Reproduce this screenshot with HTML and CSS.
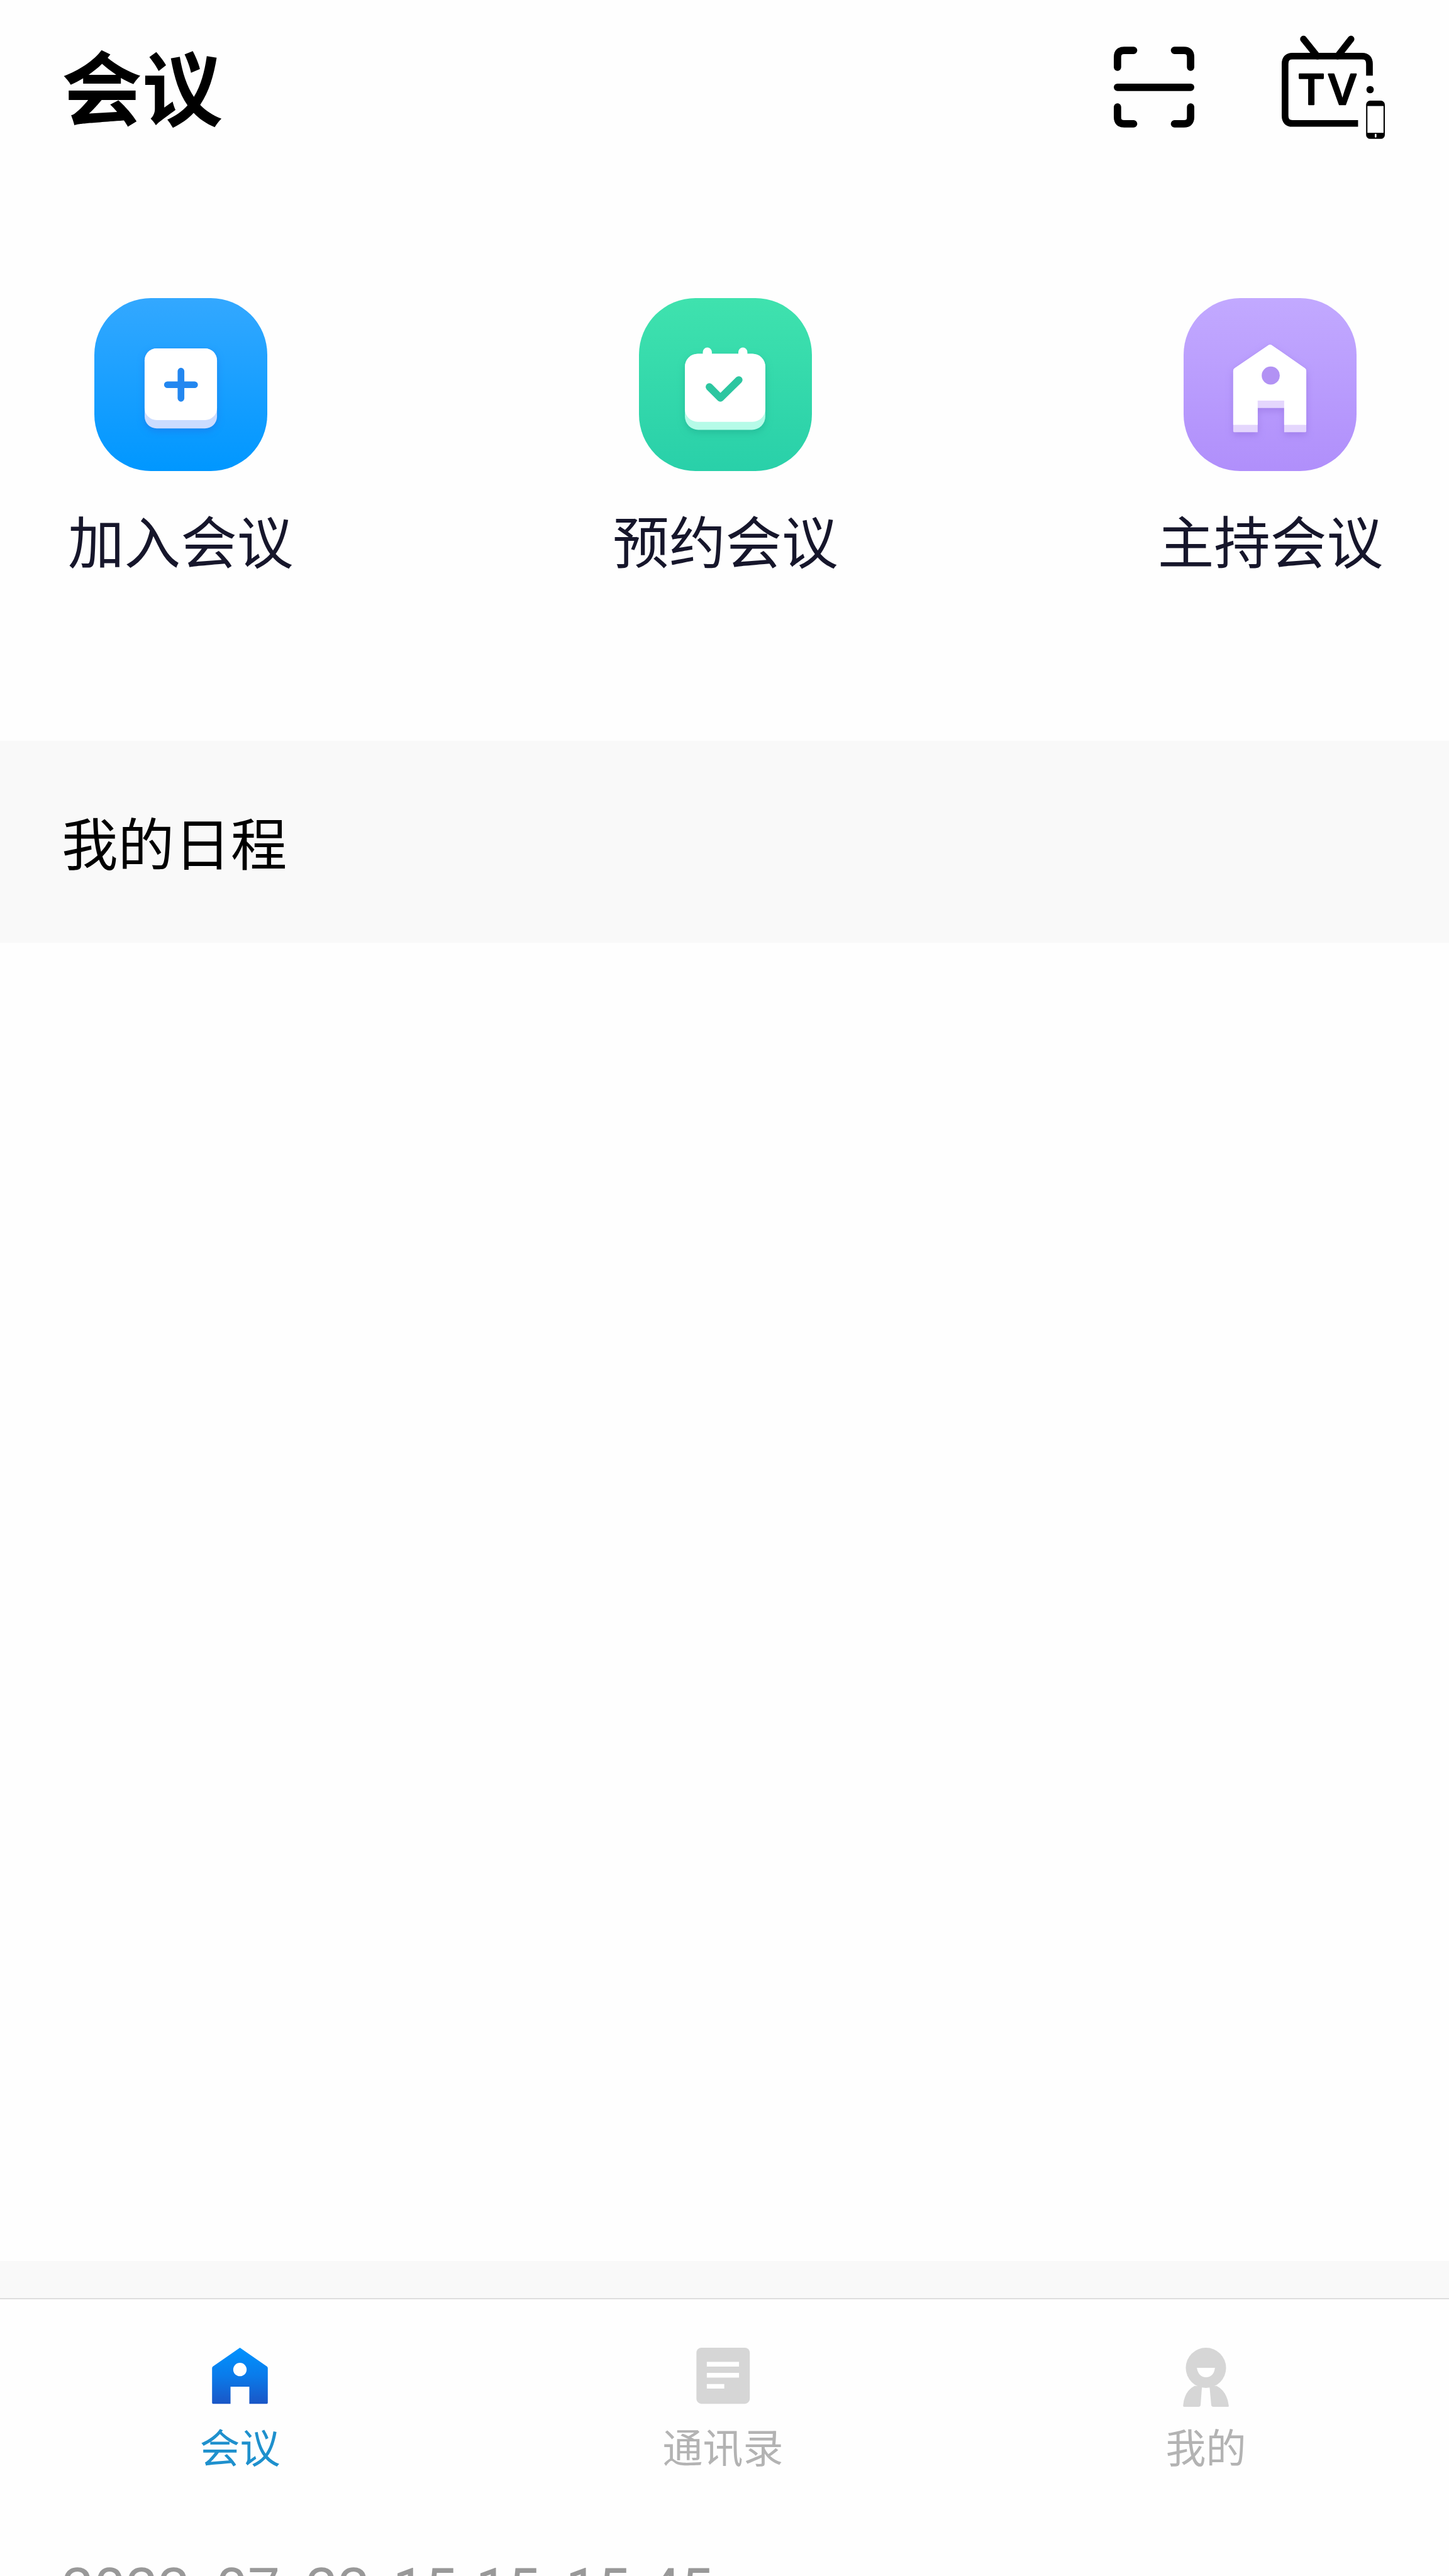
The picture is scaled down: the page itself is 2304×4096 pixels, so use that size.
FILE: index.html
```
<!DOCTYPE html>
<html lang="zh-CN">

<head>
    <meta charset="utf-8">
    <title>会议</title>
    <link rel="stylesheet" href="styles.css">
</head>

<body>
    <header class="header">
        <h1 class="page_title">会议</h1>
        <div class="header_icons">
            <svg class="icon_scan" viewBox="0 0 240 241" fill="none" stroke="#000" stroke-width="22" stroke-linecap="round">
                <path d="M11 61V31Q11 11 31 11H59M181 11H209Q229 11 229 31V61M11 180V210Q11 230 31 230H59M181 230H209Q229 230 229 210V180M11 121H229"/>
            </svg>
            <svg class="icon_tv" viewBox="0 0 308 309">
                <g fill="none" stroke="#000" stroke-width="20">
                    <path d="M262 120V85Q262 62 240 62H32Q10 62 10 85V240Q10 263 32 263H228"/>
                    <path d="M65 11L106 62M207 11L167 62" stroke-linecap="round"/>
                </g>
                <text class="tv_text" x="48" y="207" textLength="177">TV</text>
                <circle cx="264" cy="162" r="11"/>
                <rect x="252" y="195" width="56" height="114" rx="12"/>
                <rect x="256" y="211" width="48" height="80" fill="#fff"/>
                <rect x="278" y="294" width="5" height="11" rx="2" fill="#fff"/>
            </svg>
        </div>
    </header>

    <section class="actions">
        <div class="action">
            <div class="action_icon blue">
                <svg viewBox="0 0 516 516">
                    <rect class="shade_blue" x="150" y="150" width="216" height="239" rx="36" fill="#cbdcff"/>
                    <rect x="150" y="150" width="216" height="214" rx="36" fill="#fff"/>
                    <path d="M218 258.500H299M258.500 218V299" stroke="#2387f0" stroke-width="20" stroke-linecap="round"/>
                </svg>
            </div>
            <span class="action_text">加入会议</span>
        </div>
        <div class="action">
            <div class="action_icon green">
                <svg viewBox="0 0 516 516">
                    <rect class="shade_green" x="137" y="166" width="240" height="227" rx="40" fill="#b6fbe8"/>
                    <rect x="137" y="166" width="240" height="203" rx="38" fill="#fff"/>
                    <path d="M204 161V180M310 161V180" stroke="#fff" stroke-width="27" stroke-linecap="round"/>
                    <path d="M210 265L243 298L298 244" fill="none" stroke="#2cc6a0" stroke-width="22" stroke-linecap="round" stroke-linejoin="round"/>
                </svg>
            </div>
            <span class="action_text">预约会议</span>
        </div>
        <div class="action">
            <div class="action_icon purple">
                <svg viewBox="0 0 516 516">
                    <path class="shade_purple" d="M252 141Q258 137 264 141L362 209Q366 212 366 217V397Q366 400 363 400H300V328H221V400H151Q148 400 148 397V217Q148 212 152 209Z" fill="#e4d6fd"/>
                    <path d="M252 141Q258 137 264 141L362 209Q366 212 366 217V378H300V306H221V378H148V217Q148 212 152 209Z" fill="#fff"/>
                    <circle cx="260" cy="231" r="27" fill="#b292f4"/>
                </svg>
            </div>
            <span class="action_text">主持会议</span>
        </div>
    </section>

    <h2 class="sub_title">我的日程</h2>
    <main class="schedule"></main>

    <nav class="tabs">
        <div class="tab active">
            <svg class="tab_icon" viewBox="0 0 178 178">
                <defs>
                    <linearGradient id="home" x1="0" y1="0" x2="0" y2="1">
                        <stop offset="0" stop-color="#0093ff"/>
                        <stop offset="0.5" stop-color="#0a7bea"/>
                        <stop offset="1" stop-color="#1a56c6"/>
                    </linearGradient>
                </defs>
                <path d="M89 0L170 56Q172 58 172 61V164Q172 167 169 167H117V116H61V167H9Q6 167 6 164V61Q6 58 8 56Z" fill="url(#home)"/>
                <circle cx="89" cy="65" r="20" fill="#fff"/>
            </svg>
            <span>会议</span>
        </div>
        <div class="tab">
            <svg class="tab_icon" viewBox="0 0 178 178">
                <rect x="10" y="0" width="159" height="167" rx="15" fill="#d6d6d6"/>
                <path d="M41 49H137M41 82H137M41 115H93" stroke="#fff" stroke-width="14"/>
            </svg>
            <span>通讯录</span>
        </div>
        <div class="tab">
            <svg class="tab_icon" viewBox="0 0 178 178" fill="#d6d6d6">
                <path d="M55 114Q24 130 21 173Q21 176 24 176H68Q72 176 73 172L77 118H100L105 172Q106 176 110 176H154Q158 176 157 173Q152 130 121 114Z"/>
                <circle cx="89" cy="60" r="60"/>
                <path d="M62 60H116Q112 88 89 88Q67 88 62 60Z" fill="#fff"/>
            </svg>
            <span>我的</span>
        </div>
    </nav>

    <p class="meeting_time">2022<span class="dash">-</span>07<span class="dash">-</span>22 15<span class="colon">:</span>15<span class="dash">-</span>15<span class="colon">:</span>45</p>
</body>

</html>
```

FILE: styles.css
```
* {
    box-sizing: border-box;
}

body {
    width: 2304px;
    height: 4096px;
    margin: 0;
    overflow: hidden;
    display: flex;
    flex-direction: column;
    background: #fefefe;
    color: #000;
    font-family: "Noto Sans CJK SC", sans-serif;
}

body > * {
    flex-shrink: 0;
}

svg {
    display: block;
}

.header {
    height: 270px;
    padding: 0 102px 0 98px;
    display: flex;
    align-items: center;
    justify-content: space-between;
}

.page_title {
    margin: 0;
    font-size: 128px;
    font-weight: 700;
    line-height: 160px;
}

.header_icons {
    display: flex;
    align-items: center;
    gap: 139px;
    padding-top: 6px;
}

.icon_scan {
    width: 128px;
    height: 129px;
}

.icon_tv {
    width: 164px;
    height: 165px;
}

.tv_text {
    font-family: Inter, sans-serif;
    font-size: 124px;
    font-weight: 500;
    stroke: #000;
    stroke-width: 5px;
    stroke-linejoin: round;
}

.actions {
    height: 908px;
    padding: 204px 105px 0 108px;
    display: flex;
    align-items: flex-start;
    justify-content: space-between;
}

.action {
    display: flex;
    flex-direction: column;
    align-items: center;
    gap: 58px;
}

.action_icon {
    width: 275px;
    height: 275px;
    border-radius: 90px;
}

.blue {
    background: linear-gradient(#33a8ff, #0097ff);
}

.green {
    background: linear-gradient(#3fe2ae, #29d0a9);
}

.purple {
    background: linear-gradient(#c2a9ff, #b08ffb);
}

.shade_blue {
    filter: drop-shadow(0 8px 10px #1c74e899);
}

.shade_green {
    filter: drop-shadow(0 8px 10px #1fae9099);
}

.shade_purple {
    filter: drop-shadow(0 8px 10px #946fe099);
}

.action_text {
    color: #16162b;
    font-size: 89.6px;
    line-height: 100px;
}

.sub_title {
    height: 321px;
    margin: 0;
    padding-left: 98px;
    background: #f9f9f9;
    font-size: 89.6px;
    font-weight: 400;
    line-height: 319px;
}

.schedule {
    height: 2155px;
    border-bottom: 59px solid #f9f9f9;
}

.tabs {
    height: 405px;
    padding-top: 77px;
    border-top: 2px solid #dedede;
    display: grid;
    grid-template-columns: repeat(3, 1fr);
}

.tab {
    padding-right: 5px;
    display: flex;
    flex-direction: column;
    align-items: center;
    gap: 25px;
    color: #b3b3b3;
    font-size: 64px;
    line-height: 70px;
}

.active {
    color: #1e90cd;
}

.tab_icon {
    width: 95px;
    height: 95px;
}

.meeting_time {
    margin: 0;
    padding-left: 98px;
    color: #999;
    font-family: Roboto, sans-serif;
    font-size: 90.7px;
    line-height: 116px;
    white-space: nowrap;
    word-spacing: 14px;
}

.dash {
    padding: 0 8px;
}

.colon {
    padding: 0 4px;
}
```
